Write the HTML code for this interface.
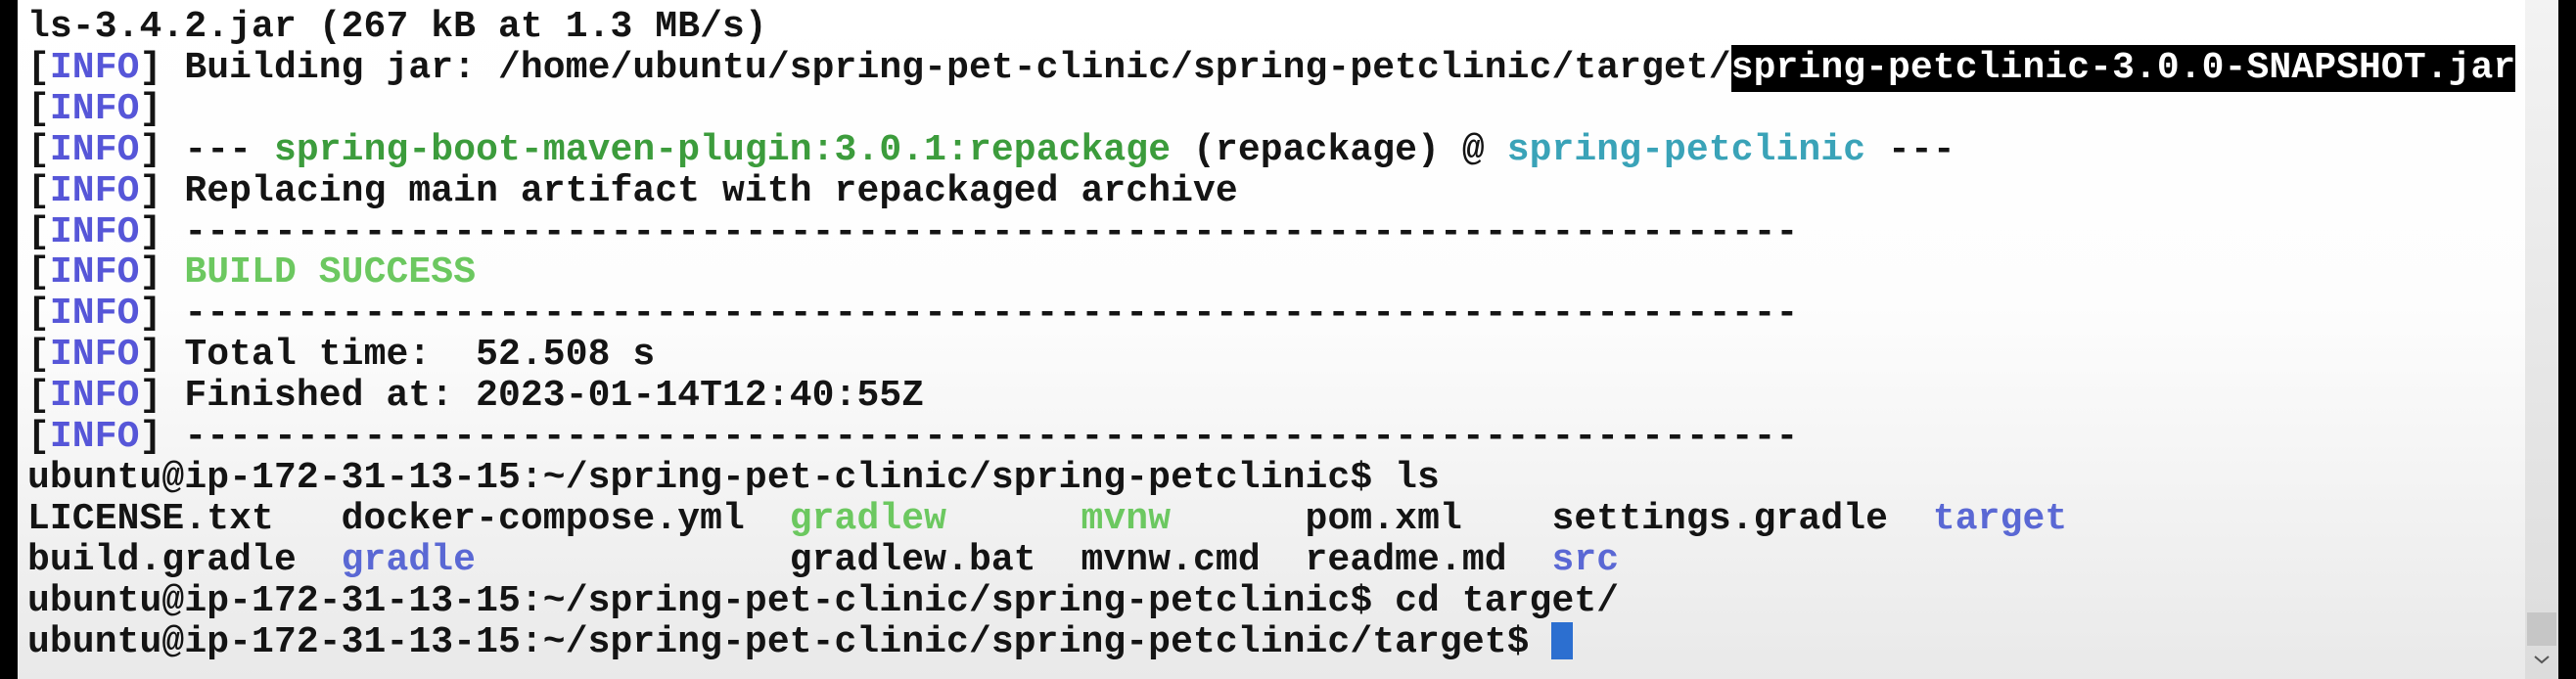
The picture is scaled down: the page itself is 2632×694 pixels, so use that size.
<!DOCTYPE html>
<html><head><meta charset="utf-8"><style>
html,body{margin:0;padding:0;width:2632px;height:694px;overflow:hidden;background:#000;}
.term{position:absolute;left:18px;top:0;width:2562px;height:694px;background:linear-gradient(#ffffff 0%,#fdfdfd 45%,#e9e9e9 100%);}
pre{position:absolute;left:10px;top:7px;margin:0;font-family:"Liberation Mono",monospace;font-weight:bold;font-size:38px;line-height:41.9px;color:#141414;white-space:pre;letter-spacing:0.1px;}
.b{color:#5656d8}.g{color:#3c9c3c}.lg{color:#6cc860}.c{color:#3aa3b8}.d{color:#5a68d4}
.hl{background:#000;color:#fff;padding:2px 0 3px 0}
.cur{display:inline-block;width:22px;height:38px;background:#2c6fd0;vertical-align:-8px;}
.sb{position:absolute;left:2580px;top:0;width:34px;height:694px;background:linear-gradient(#f3f3f3,#dcdcdc);}
.thumb{position:absolute;left:2px;top:626px;width:30px;height:34px;background:#c6c6c6;}
.chev{position:absolute;left:8px;top:668px;}
.rb{position:absolute;left:2614px;top:0;width:18px;height:694px;background:#000;}
</style></head><body>
<div class="term">
<pre>ls-3.4.2.jar (267 kB at 1.3 MB/s)
[<span class="b">INFO</span>] Building jar: /home/ubuntu/spring-pet-clinic/spring-petclinic/target/<span class="hl">spring-petclinic-3.0.0-SNAPSHOT.jar</span>
[<span class="b">INFO</span>]
[<span class="b">INFO</span>] --- <span class="g">spring-boot-maven-plugin:3.0.1:repackage</span> (repackage) @ <span class="c">spring-petclinic</span> ---
[<span class="b">INFO</span>] Replacing main artifact with repackaged archive
[<span class="b">INFO</span>] ------------------------------------------------------------------------
[<span class="b">INFO</span>] <span class="lg">BUILD SUCCESS</span>
[<span class="b">INFO</span>] ------------------------------------------------------------------------
[<span class="b">INFO</span>] Total time:  52.508 s
[<span class="b">INFO</span>] Finished at: 2023-01-14T12:40:55Z
[<span class="b">INFO</span>] ------------------------------------------------------------------------
ubuntu@ip-172-31-13-15:~/spring-pet-clinic/spring-petclinic$ ls
LICENSE.txt   docker-compose.yml  <span class="lg">gradlew</span>      <span class="lg">mvnw</span>      pom.xml    settings.gradle  <span class="d">target</span>
build.gradle  <span class="d">gradle</span>              gradlew.bat  mvnw.cmd  readme.md  <span class="d">src</span>
ubuntu@ip-172-31-13-15:~/spring-pet-clinic/spring-petclinic$ cd target/
ubuntu@ip-172-31-13-15:~/spring-pet-clinic/spring-petclinic/target$ <span class="cur"></span></pre>
</div>
<div class="sb"><div class="thumb"></div><svg class="chev" width="18" height="12" viewBox="0 0 18 12"><path d="M2 3 L9 9 L16 3" fill="none" stroke="#555" stroke-width="2"/></svg></div>
<div class="rb"></div>
</body></html>
